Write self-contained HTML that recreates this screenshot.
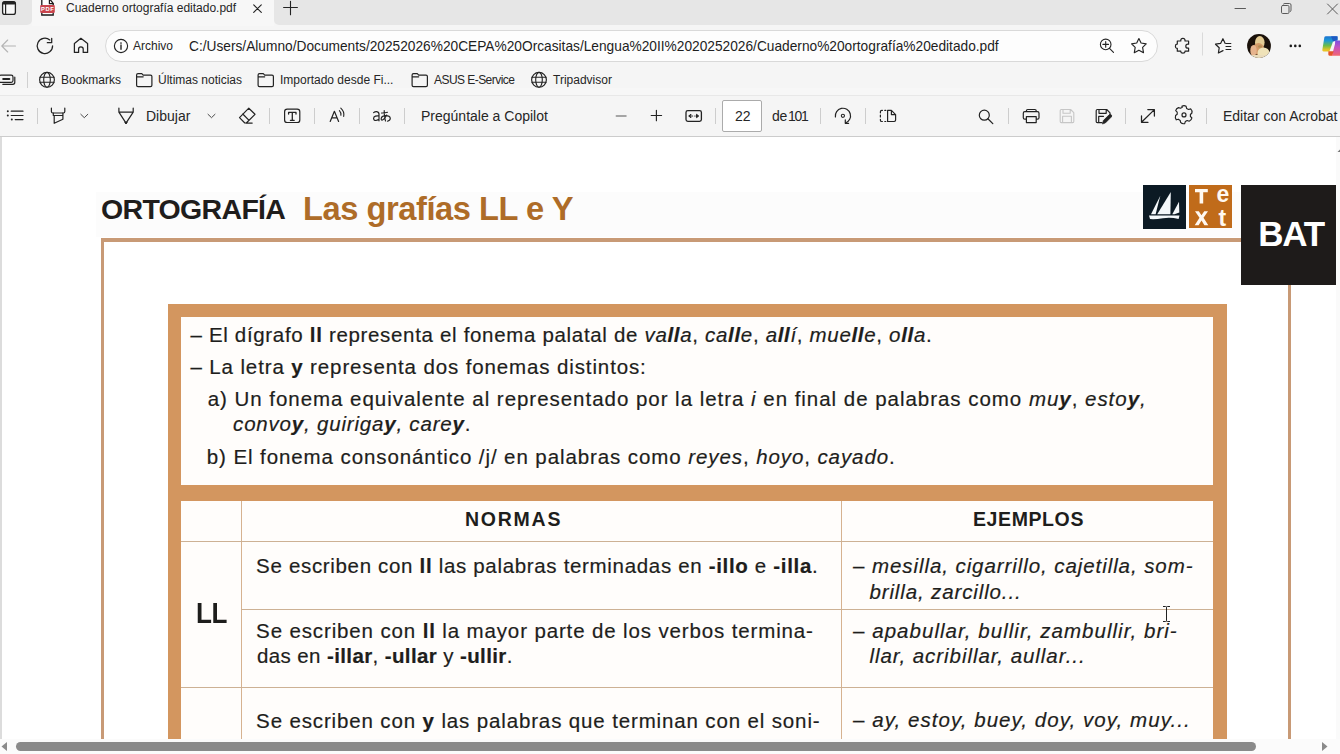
<!DOCTYPE html>
<html><head><meta charset="utf-8">
<style>
*{margin:0;padding:0;box-sizing:border-box}
html,body{width:1340px;height:754px;overflow:hidden;background:#fff;font-family:"Liberation Sans",sans-serif}
.a{position:absolute}
.t{position:absolute;white-space:pre;line-height:1}
svg{position:absolute;overflow:visible}
.ic{fill:none;stroke:#262626;stroke-width:1.1;stroke-linecap:round;stroke-linejoin:round}
.sep{position:absolute;width:1px;background:#cfcfcf}
.ct{color:#262626;font-size:12px}
.pt{color:#262626;font-size:14px}
.bd{font-size:20.5px;color:#1e1e1c;-webkit-text-stroke:0.2px #1e1e1c}
.hl{position:absolute;background:#cdb194;height:1px}
.vl{position:absolute;background:#d6b290;width:1px}
</style></head><body>
<!-- ============ TAB STRIP ============ -->
<div class="a" style="left:0;top:0;width:1340px;height:137px;background:#f5f5f5"></div>
<div class="a" style="left:0;top:0;width:32px;height:25px;background:#e6e6e6;border-bottom-right-radius:5px"></div>
<div class="a" style="left:274px;top:0;width:1066px;height:25px;background:#e6e6e6;border-bottom-left-radius:5px"></div>
<div class="a" style="left:32px;top:0;width:242px;height:26px;background:#f7f7f7"></div>
<div class="a" style="left:0;top:95px;width:1340px;height:1px;background:#e8e8e8"></div>
<div class="a" style="left:0;top:88px;width:1340px;height:7px;background:#f7f7f7"></div>
<div class="a" style="left:0;top:136px;width:1340px;height:1px;background:#cccccc"></div>
<!-- address pill -->
<div class="a" style="left:105px;top:30px;width:1053px;height:31.5px;background:#fdfdfd;border:1px solid #d9d9d9;border-radius:16px"></div>
<div class="a" style="left:722px;top:100px;width:40px;height:32px;background:#fff;border:1px solid #ababab;border-radius:2px"></div>

<svg style="left:0;top:0" width="1340" height="137">
<g fill="none" stroke="#232323" stroke-width="1.2" stroke-linecap="round" stroke-linejoin="round">
 <!-- sidebar -->
 <rect x="2.6" y="1.6" width="12.8" height="12.8" rx="2.2" stroke-width="1.3" fill="#f8f8f8"/>
 <rect x="2.6" y="1.6" width="12.8" height="2.8" rx="1" fill="#232323" stroke="none"/>
 <line x1="5.6" y1="3" x2="5.6" y2="14.3" stroke-width="1.2"/>
 <!-- tab close, new tab -->
 <path d="M253.7 4.8 L261.3 12.4 M261.3 4.8 L253.7 12.4" stroke-width="1.1"/>
 <path d="M290.5 1.2 V14.8 M283.6 7.5 H297.4" stroke-width="1.1"/>
 <!-- window controls -->
 <path d="M1235 8.5 H1245.5" stroke="#5a5a5a" stroke-width="1"/>
 <rect x="1281.5" y="5.5" width="7.5" height="8" rx="1.2" stroke="#5a5a5a" stroke-width="1"/>
 <path d="M1283.5 4 Q1284 3.5 1285 3.5 H1289.5 Q1291 3.5 1291 5 V10 Q1291 11 1290.5 11.5" stroke="#5a5a5a" stroke-width="1"/>
 <path d="M1327.5 4 L1337.5 14 M1337.5 4 L1327.5 14" stroke="#5a5a5a" stroke-width="1"/>
 <!-- back -->
 <path d="M15.5 46 H1.8 M7.7 40 L1.8 46 L7.7 52" stroke="#b4b4b4" stroke-width="1.1"/>
 <!-- refresh -->
 <path d="M52.6 45.8 A7.7 7.7 0 1 1 49.8 39.9" stroke-width="1.25"/>
 <path d="M51.7 38.3 V42.7 H47.3" stroke-width="1.25"/>
 <!-- home -->
 <path d="M74.4 52.4 V43.4 L80.9 38.3 L87.6 43.4 V52.4 H83.2 V49 Q83.2 46.8 80.9 46.8 Q78.6 46.8 78.6 49 V52.4 Z" stroke-width="1.25"/>
 <!-- info -->
 <circle cx="121" cy="46" r="6.6" stroke-width="1.15"/>
 <path d="M121 45 V49.3" stroke-width="1.4"/>
 <!-- zoom -->
 <circle cx="1105.7" cy="44.4" r="5.3" stroke-width="1.1"/>
 <path d="M1105.7 41.6 V47.2 M1102.9 44.4 H1108.5 M1109.5 48.3 L1113.5 52.3" stroke-width="1.1"/>
 <!-- star -->
 <path d="M1138.9 38.6 L1141.1 43 L1146.2 43.9 L1142.6 47.4 L1143.5 52.7 L1138.9 50.2 L1134.3 52.7 L1135.2 47.4 L1131.6 43.9 L1136.7 43 Z" stroke-width="1.15"/>
 <!-- puzzle -->
 <path d="M1177.3 41 H1180.8 V40.3 Q1180.8 38.3 1182.9 38.3 Q1185 38.3 1185 40.3 V41 H1188.6 V44.2 H1187.9 Q1185.8 44.2 1185.8 46.2 Q1185.8 48.2 1187.9 48.2 H1188.6 V51.2 H1185 V51.8 Q1185 53.2 1182.9 53.2 Q1180.8 53.2 1180.8 51.8 V51.2 H1177.3 V48.3 H1176.8 Q1175.4 48.3 1175.4 46.2 Q1175.4 44.1 1176.8 44.1 H1177.3 Z" stroke-width="1.2"/>
 <!-- fav -->
 <path d="M1225.2 43.4 L1222.9 38.7 L1220.6 43.4 L1215.5 44.2 L1219.2 47.8 L1218.4 53 L1223 50.6" stroke-width="1.2"/>
 <path d="M1226 43.5 H1230.8 M1226 46.5 H1230.8 M1226 49.5 H1230.8" stroke-width="1.2"/>
 <!-- bookmarks bar icon -->
 <rect x="-1" y="75.2" width="14" height="7.2" rx="1.8" stroke-width="1.2"/>
 <path d="M14.8 77.2 V82.3 Q14.8 84.3 12.8 84.3 H2.8" stroke-width="1.2"/>
 <path d="M3.2 78.9 H9.3" stroke-width="2"/>
 <!-- globes -->
 <g>
 <circle cx="47" cy="79.8" r="7.4" stroke-width="1.15"/>
 <ellipse cx="47" cy="79.8" rx="3.3" ry="7.4" stroke-width="1.1"/>
 <path d="M40 77.3 H54 M40 82.3 H54" stroke-width="1.1"/>
 </g>
 <g transform="translate(492,0)">
 <circle cx="47" cy="79.8" r="7.4" stroke-width="1.15"/>
 <ellipse cx="47" cy="79.8" rx="3.3" ry="7.4" stroke-width="1.1"/>
 <path d="M40 77.3 H54 M40 82.3 H54" stroke-width="1.1"/>
 </g>
 <!-- folders -->
 <g>
 <path d="M136.6 75 Q136.6 73.6 138 73.6 H141.8 L143.2 75.2 H150.5 Q151.9 75.2 151.9 76.6 V85.2 Q151.9 86.6 150.5 86.6 H138 Q136.6 86.6 136.6 85.2 Z M136.6 76.8 H143.2" stroke-width="1.2"/>
 </g>
 <g transform="translate(121.5,0)">
 <path d="M136.6 75 Q136.6 73.6 138 73.6 H141.8 L143.2 75.2 H150.5 Q151.9 75.2 151.9 76.6 V85.2 Q151.9 86.6 150.5 86.6 H138 Q136.6 86.6 136.6 85.2 Z M136.6 76.8 H143.2" stroke-width="1.2"/>
 </g>
 <g transform="translate(275.5,0)">
 <path d="M136.6 75 Q136.6 73.6 138 73.6 H141.8 L143.2 75.2 H150.5 Q151.9 75.2 151.9 76.6 V85.2 Q151.9 86.6 150.5 86.6 H138 Q136.6 86.6 136.6 85.2 Z M136.6 76.8 H143.2" stroke-width="1.2"/>
 </g>
 <!-- pdf toolbar: list -->
 <path d="M11.2 111.2 H23 M11.2 115.5 H23 M15.2 119.6 H23" stroke-width="1.2"/>
 <circle cx="7.8" cy="111.2" r="1" fill="#232323" stroke="none"/>
 <circle cx="7.8" cy="115.5" r="1" fill="#232323" stroke="none"/>
 <circle cx="11.8" cy="119.6" r="1" fill="#232323" stroke="none"/>
 <!-- highlighter -->
 <path d="M51.4 108 V111.5 Q51.4 113 52.9 113 H63.3 Q64.8 113 64.8 111.5 V108" stroke-width="1.2"/>
 <path d="M53.3 113 V115.5 H62.9 V113 M54.2 115.5 V123.3 L62.9 119.3 V115.5" stroke-width="1.2"/>
 <!-- chevrons -->
 <path d="M80.8 114.3 L84.3 117.7 L87.8 114.3 M208 114.3 L211.5 117.7 L215 114.3" stroke="#4a4a4a" stroke-width="1"/>
 <!-- draw -->
 <path d="M118.9 108 V112.2 H133.2 V108 M118.9 112.2 L126 123.2 L133.2 112.2" stroke-width="1.2"/>
 <path d="M125 122.5 L126 124 L127 122.5 Z" fill="#232323" stroke-width="1"/>
 <!-- eraser -->
 <path d="M248.8 108.2 L255 114.3 L246.3 123 H244.8 L239.5 117.7 Z M242.8 114 L248.8 120.1 M246 123.1 H252.2" stroke-width="1.2"/>
 <!-- text box -->
 <rect x="284.6" y="109.2" width="15.2" height="13.3" rx="2.6" stroke-width="1.2"/>
 <path d="M288.6 114 V112.4 H296 V114 M292.3 112.4 V120.3 M290.4 120.3 H294.2" stroke-width="1.3"/>
 <!-- read aloud -->
 <path d="M330.2 121.5 L334.4 111.3 L338.6 121.5 M331.8 117.8 H337" stroke-width="1.2"/>
 <path d="M339.4 110.6 Q341.3 112.6 340.9 115.3 M340.8 108.2 Q344.6 111.6 343.7 116.4" stroke-width="1.1"/>
 <!-- translate a -->
 <path d="M373.6 112.6 Q375 111.4 376.8 111.6 Q379 112 379 114.3 V120.8 M379 116 Q375.5 115.6 374 117 Q373 118.6 374.2 120 Q375.8 121.3 379 119.3" stroke-width="1.2"/>
 <!-- あ -->
 <path d="M381.5 113 Q384.5 113.2 387.5 112.3 M384.2 110.6 Q384 116 385.5 121 M386.6 115 Q385 119 382.5 120 Q381 120.5 381.2 118.5 Q381.6 116 385 115.6 Q390 115.5 390.3 118.2 Q390.3 120.5 387.4 121.2" stroke-width="1.15"/>
 <!-- minus / plus -->
 <path d="M616.3 115.9 H626" stroke="#8a8a8a" stroke-width="1.5"/>
 <path d="M656.4 110.3 V120.7 M651.2 115.5 H661.6" stroke-width="1.15"/>
 <!-- fit width -->
 <rect x="686" y="110.6" width="15.4" height="10.8" rx="1.8" stroke-width="1.3"/>
 <path d="M690.6 114.5 L688.7 116 L690.6 117.5 Z M696.8 114.5 L698.7 116 L696.8 117.5 Z" fill="#232323" stroke-width="1"/>
 <path d="M692.3 116 H692.6 M694.8 116 H695.1" stroke-width="1.2"/>
 <!-- rotate -->
 <path d="M835.4 117 A7.6 7.6 0 1 1 845.5 123" stroke-width="1.2"/>
 <path d="M845.3 119.8 V123.3 H848.6" stroke-width="1.2"/>
 <circle cx="842.9" cy="115.8" r="1.6" stroke-width="1.1"/>
 <!-- two page -->
 <path d="M882.4 110.4 H881.8 Q880.4 110.4 880.4 111.8 V112.8 M880.4 115.2 V117 M880.4 119.4 V120.2 Q880.4 121.5 881.8 121.5 H882.4 M884.8 110.4 H885.8 M884.8 121.5 H885.8" stroke-width="1.2"/>
 <path d="M887.6 110.4 H891.4 L895.6 114.6 V120.1 Q895.6 121.5 894.2 121.5 H887.6 Z M891.4 110.4 V114.6 H895.6" stroke-width="1.2"/>
 <!-- search -->
 <circle cx="984.3" cy="115.2" r="5" stroke-width="1.2"/>
 <path d="M987.9 118.8 L992.8 123.6" stroke-width="1.25"/>
 <!-- print -->
 <path d="M1026.4 111.6 V110.8 Q1026.4 109.5 1027.7 109.5 H1034.9 Q1036.2 109.5 1036.2 110.8 V111.6 M1026.4 119.2 H1024.8 Q1023.3 119.2 1023.3 117.7 V113.2 Q1023.3 111.6 1024.8 111.6 H1037.4 Q1039 111.6 1039 113.2 V117.7 Q1039 119.2 1037.4 119.2 H1036.2 M1026.4 116.6 H1036.2 V122.6 H1026.4 Z" stroke-width="1.2"/>
 <!-- save disabled -->
 <path d="M1060.2 110.6 Q1060.2 109.5 1061.3 109.5 H1070.6 L1073.8 112.7 V121.5 Q1073.8 122.6 1072.7 122.6 H1061.3 Q1060.2 122.6 1060.2 121.5 Z M1063 109.5 V113.3 H1070.2 V109.5 M1062.6 122.6 V116.3 H1071.4 V122.6" stroke="#c6c6c6" stroke-width="1.1"/>
 <!-- save as -->
 <path d="M1102 122.6 H1097.4 Q1096.2 122.6 1096.2 121.4 V110.7 Q1096.2 109.5 1097.4 109.5 H1106.7 L1110 112.8 V114 M1099 109.5 V113.3 H1106.2 V109.5 M1098.7 122.6 V116.3 H1103.5" stroke-width="1.2"/>
 <path d="M1102.6 123.6 L1103.4 120.5 L1109 114.9 Q1110.2 113.8 1111.3 114.9 Q1112.3 116 1111.2 117.1 L1105.6 122.7 Z" fill="#232323" stroke-width="0.8"/>
 <!-- fullscreen -->
 <path d="M1141.5 122.3 L1154.4 109.6 M1147.8 109.6 H1154.4 V116 M1141.5 115.9 V122.3 H1148" stroke-width="1.25"/>
 <!-- gear -->
 <path d="M1181.9 107.3 Q1184 105.8 1186.1 107.3 L1186.6 109.4 L1188.6 110.5 L1190.7 109.9 Q1192.5 111.6 1191.9 114 L1190.4 115.5 V117.5 L1191.9 118.9 Q1191.4 121.4 1189.2 122.2 L1187.2 121.5 L1185.3 122.6 L1184.7 124.6 Q1182.2 125.2 1180.6 123.4 L1180.2 121.4 L1178.3 120.2 L1176.3 120.8 Q1174.8 118.8 1175.6 116.5 L1177.2 115.2 V113.2 L1175.7 111.7 Q1176.3 109.3 1178.5 108.6 L1180.5 109.2 L1182.3 108.2 Z" stroke-width="1.15" transform="translate(0,-1)"/>
 <circle cx="1184" cy="114.9" r="2" stroke-width="1.2"/>
</g>
<circle cx="121" cy="43" r="0.85" fill="#232323"/>
<circle cx="1290.8" cy="45.9" r="1.3" fill="#1a1a1a"/>
<circle cx="1295.3" cy="45.9" r="1.3" fill="#1a1a1a"/>
<circle cx="1299.8" cy="45.9" r="1.3" fill="#1a1a1a"/>
<!-- separators -->
<g fill="#cdcdcd">
 <rect x="27" y="72" width="1" height="16" fill="#d0d0d0"/>
 <rect x="1202" y="32.5" width="1" height="23" fill="#dadada"/>
 <rect x="37" y="108" width="1" height="16"/>
 <rect x="269" y="108" width="1" height="16"/>
 <rect x="314" y="108" width="1" height="16"/>
 <rect x="359" y="108" width="1" height="16"/>
 <rect x="404" y="108" width="1" height="16"/>
 <rect x="715" y="108" width="1" height="16"/>
 <rect x="820" y="108" width="1" height="16"/>
 <rect x="865" y="108" width="1" height="16"/>
 <rect x="1008" y="108" width="1" height="16"/>
 <rect x="1125" y="108" width="1" height="16"/>
 <rect x="1206" y="108" width="1" height="16"/>
</g>
<!-- pdf file icon -->
<path d="M41.8 -1 V15 H53.2 V3.4 L49.6 -1" fill="#fff" stroke="#1a1a1a" stroke-width="1.3"/>
<path d="M49.4 -1 V3.6 H53.4" fill="none" stroke="#1a1a1a" stroke-width="1.2"/>
<rect x="40.2" y="4.9" width="14.6" height="8" rx="1.2" fill="#c9454e"/>
<text x="47.7" y="11.2" font-size="5.8" font-weight="bold" fill="#fff" text-anchor="middle" font-family="Liberation Sans" letter-spacing="0.6">PDF</text>
</svg>

<div class="t ct" style="left:66px;top:2px;color:#262626">Cuaderno ortografía editado.pdf</div>
<div class="t ct" style="left:133px;top:40px;color:#262626">Archivo</div>
<div class="t" style="left:189px;top:40px;font-size:13.72px;color:#1e1e1e">C:/Users/Alumno/Documents/20252026%20CEPA%20Orcasitas/Lengua%20II%2020252026/Cuaderno%20ortografía%20editado.pdf</div>

<svg style="left:1247px;top:34px" width="24" height="24"><defs><clipPath id="avc"><circle cx="12" cy="12" r="11.9"/></clipPath><filter id="avb" x="-10%" y="-10%" width="120%" height="120%"><feGaussianBlur stdDeviation="0.7"/></filter></defs><g clip-path="url(#avc)"><rect width="24" height="24" fill="#1a110a"/><g filter="url(#avb)"><ellipse cx="12.8" cy="8.5" rx="4.8" ry="6.5" fill="#e4cc94"/><ellipse cx="11.5" cy="15" rx="5.5" ry="6" fill="#d39a68"/><ellipse cx="6.5" cy="16.5" rx="3.2" ry="5.5" fill="#e6b48e"/><ellipse cx="16.5" cy="19" rx="6" ry="5.5" fill="#efe2b8"/><rect x="3" y="21" width="18" height="4" fill="#eadcbc"/><ellipse cx="13" cy="12.5" rx="2" ry="1.2" fill="#a88a50" opacity="0.8"/></g></g></svg>
<svg style="left:1316px;top:32px" width="24" height="28"><defs><linearGradient id="cp1" x1="0" y1="0" x2="0" y2="1"><stop offset="0" stop-color="#1a72d0"/><stop offset="0.3" stop-color="#1f9ad6"/><stop offset="0.62" stop-color="#6cbc48"/><stop offset="0.9" stop-color="#e8c428"/></linearGradient><linearGradient id="cp2" x1="0" y1="0" x2="0" y2="1"><stop offset="0" stop-color="#7a50e0"/><stop offset="0.45" stop-color="#c452c0"/><stop offset="1" stop-color="#f46670"/></linearGradient><filter id="cpb"><feGaussianBlur stdDeviation="0.45"/></filter></defs><g filter="url(#cpb)"><path d="M10 4.2 Q8.6 4.2 8.3 5.6 L6.3 18 Q6.2 19.4 7.6 19.4 H13.4 L17 9.6 L21.6 8.2 V4.2 Z" fill="url(#cp1)"/><path d="M15 4.2 H20.5 Q21.8 4.4 21.6 6 L21.4 8.4 L17 9.6 Z" fill="#1e4cbc" opacity="0.75"/><path d="M19.2 8.6 H24 V23.8 H15.9 L19 12 Z" fill="url(#cp2)"/><path d="M12.4 19.2 H17.7 L16 23.8 H13.6 Q12 23.8 12.3 22 Z" fill="#e4542a"/></g></svg>

<div class="t ct" style="left:61px;top:74px">Bookmarks</div>
<div class="t ct" style="left:158px;top:74px">Últimas noticias</div>
<div class="t ct" style="left:280px;top:74px">Importado desde Fi...</div>
<div class="t ct" style="left:434px;top:74px;letter-spacing:-0.55px">ASUS E-Service</div>
<div class="t ct" style="left:553px;top:74px">Tripadvisor</div>

<div class="t pt" style="left:146px;top:109px">Dibujar</div>
<div class="t pt" style="left:421px;top:109px">Pregúntale a Copilot</div>
<div class="t pt" style="left:735px;top:109px">22</div>
<div class="t pt" style="left:772px;top:109px;letter-spacing:-0.4px">de</div><div class="t pt" style="left:788px;top:109px;letter-spacing:-1.3px">101</div>
<div class="t pt" style="left:1223px;top:109px">Editar con Acrobat</div>

<!-- ============ PDF PAGE ============ -->
<div class="a" style="left:0;top:137px;width:2px;height:602px;background:#dcdcdc"></div>
<!-- title -->
<div class="a" style="left:96px;top:192px;width:1145px;height:45px;background:#fcfcfc"></div>
<div class="t" style="left:101.00px;top:195.46px;font-size:28.53px;font-weight:bold;color:#1f1d1c;letter-spacing:-0.691px">ORTOGRAFÍA</div>
<div class="t" style="left:303.00px;top:193.30px;font-size:32.65px;font-weight:bold;color:#ae6c28;letter-spacing:-0.445px">Las grafías LL e Y</div>
<!-- logo -->
<div class="a" style="left:1143px;top:185px;width:43px;height:44px;background:#0c1a24"></div>
<svg style="left:1143px;top:185px" width="43" height="44"><path d="M8 29.3 L17.3 10.8 L12.6 29.3 Z" fill="#f4f8fa"/><path d="M14.2 29.3 L27.8 7 L27.4 29.3 Z" fill="#f4f8fa"/><path d="M29.3 29.3 L36 16.8 L36.3 27.5 L31.5 29.3 Z" fill="#f4f8fa"/><path d="M6 30.6 H36.5 L35.6 34 Q28 32 20 33.2 Q12 34.5 7 34 Z" fill="#f4f8fa"/></svg>
<div class="a" style="left:1189px;top:185px;width:43px;height:43px;background:#c06b1a"></div>
<svg style="left:1189px;top:185px" width="43" height="43"><path d="M6 4 H18.8 V7.2 H14.2 V18.5 H10.6 V7.2 H6 Z" fill="#fff8f0"/><path d="M6 26.3 L9.8 26.3 L12.5 30.2 L15.2 26.3 L19 26.3 L14.5 32.8 L19.3 40.2 L15.4 40.2 L12.5 35.6 L9.6 40.2 L5.7 40.2 L10.5 32.8 Z" fill="#fff8f0"/></svg>
<div class="t" style="left:1216.5px;top:182.5px;font-size:23px;font-weight:bold;color:#fff8f0">e</div>
<div class="t" style="left:1218.5px;top:206.5px;font-size:23px;font-weight:bold;color:#fff8f0">t</div>
<!-- BAT -->
<div class="a" style="left:1241px;top:185px;width:95px;height:100px;background:#1e1b1a"></div>
<div class="t" style="left:1258.3px;top:215.8px;font-size:35px;font-weight:bold;color:#fff;letter-spacing:-1.3px">BAT</div>
<!-- frame lines -->
<div class="a" style="left:101px;top:238.3px;width:1140px;height:3.5px;background:#c89a76"></div>
<div class="a" style="left:101px;top:238px;width:3px;height:501px;background:#c89a76"></div>
<div class="a" style="left:1288px;top:285px;width:3px;height:454px;background:#c89a76"></div>

<!-- inner box -->
<div class="a" style="left:168px;top:304px;width:1059px;height:435px;background:#d3965f"></div>
<div class="a" style="left:181px;top:317px;width:1032px;height:168px;background:#fffdfb"></div>
<div class="a" style="left:181px;top:501px;width:1032px;height:238px;background:#fffdfb"></div>

<div id="L1" class="t bd" style="left:190.46px;top:324.75px;letter-spacing:0.674px">– El dígrafo <b>ll</b> representa el fonema palatal de <i>va<b>ll</b>a</i>, <i>ca<b>ll</b>e</i>, <i>a<b>ll</b>í</i>, <i>mue<b>ll</b>e</i>, <i>o<b>ll</b>a</i>.</div>
<div id="L2" class="t bd" style="left:190.46px;top:356.65px;letter-spacing:0.876px">– La letra <b>y</b> representa dos fonemas distintos:</div>
<div id="L3" class="t bd" style="left:207.64px;top:388.75px;letter-spacing:0.968px">a) Un fonema equivalente al representado por la letra <i>i</i> en final de palabras como <i>mu<b>y</b></i>, <i>esto<b>y</b>,</i></div>
<div id="L4" class="t bd" style="left:233.10px;top:414.15px;letter-spacing:0.802px"><i>convo<b>y</b>, guiriga<b>y</b>, care<b>y</b></i>.</div>
<div id="L5" class="t bd" style="left:206.74px;top:446.55px;letter-spacing:0.910px">b) El fonema consonántico /j/ en palabras como <i>reyes</i>, <i>hoyo</i>, <i>cayado</i>.</div>

<!-- table lines -->
<div class="vl" style="left:241px;top:501px;height:238px"></div>
<div class="vl" style="left:841px;top:501px;height:238px"></div>
<div class="hl" style="left:181px;top:541px;width:1032px"></div>
<div class="hl" style="left:241px;top:609px;width:972px"></div>
<div class="hl" style="left:181px;top:687px;width:1032px"></div>

<div class="t" style="left:465px;top:509.5px;font-size:19.5px;font-weight:bold;color:#1e1e1c;letter-spacing:1.75px">NORMAS</div>
<div class="t" style="left:973px;top:509.5px;font-size:19.5px;font-weight:bold;color:#1e1e1c;letter-spacing:0.6px">EJEMPLOS</div>
<div class="t" style="left:195.5px;top:598.74px;font-size:28.98px;font-weight:bold;color:#1e1e1c;letter-spacing:-0.5px;transform:scaleX(0.9);transform-origin:0 0">LL</div>

<div id="N1" class="t bd" style="left:256.10px;top:556.25px;letter-spacing:0.673px">Se escriben con <b>ll</b> las palabras terminadas en <b>-illo</b> e <b>-illa</b>.</div>
<div id="N2a" class="t bd" style="left:256.10px;top:621.25px;letter-spacing:0.864px">Se escriben con <b>ll</b> la mayor parte de los verbos termina-</div>
<div id="N2b" class="t bd" style="left:257.00px;top:645.95px;letter-spacing:0.384px">das en <b>-illar</b>, <b>-ullar</b> y <b>-ullir</b>.</div>
<div id="N3" class="t bd" style="left:256.10px;top:710.65px;letter-spacing:0.860px">Se escriben con <b>y</b> las palabras que terminan con el soni-</div>

<div id="E1a" class="t bd" style="left:853.00px;top:555.65px;letter-spacing:0.924px">– <i>mesilla, cigarrillo, cajetilla, som-</i></div>
<div id="E1b" class="t bd" style="left:869.46px;top:581.65px;letter-spacing:0.870px"><i>brilla, zarcillo...</i></div>
<div id="E2a" class="t bd" style="left:853.00px;top:620.85px;letter-spacing:1.044px">– <i>apabullar, bullir, zambullir, bri-</i></div>
<div id="E2b" class="t bd" style="left:869.46px;top:645.85px;letter-spacing:0.945px"><i>llar, acribillar, aullar...</i></div>
<div id="E3" class="t bd" style="left:853.00px;top:709.65px;letter-spacing:1.055px">– <i>ay, estoy, buey, doy, voy, muy...</i></div>

<!-- cursor -->
<svg style="left:1162px;top:605px" width="10" height="19"><path d="M1 1.5 H3.6 Q4.5 1.5 4.5 2.5 V15.5 Q4.5 16.5 3.6 16.5 H1 M8 1.5 H5.4 Q4.5 1.5 4.5 2.5 M8 16.5 H5.4 Q4.5 16.5 4.5 15.5" fill="none" stroke="#222" stroke-width="1"/></svg>

<!-- right scrollbar sliver -->
<div class="a" style="left:1336px;top:137px;width:4px;height:602px;background:#fafafa"></div>
<svg style="left:1336px;top:148px" width="4" height="5"><path d="M4 1.5 L4 4 L1.5 4 Z" fill="#777"/></svg>

<!-- horizontal scrollbar -->
<div class="a" style="left:0;top:739px;width:1340px;height:15px;background:#fbfbfb"></div>
<div class="a" style="left:16px;top:742px;width:1240px;height:9px;background:#8a8a8a;border-radius:5px"></div>
<svg style="left:0px;top:742px" width="8" height="10"><path d="M7 0 V9 L1.5 4.5 Z" fill="#8a8a8a"/></svg>
<svg style="left:1321px;top:742px" width="8" height="10"><path d="M1 0 V9 L6.5 4.5 Z" fill="#8a8a8a"/></svg>
</body></html>
